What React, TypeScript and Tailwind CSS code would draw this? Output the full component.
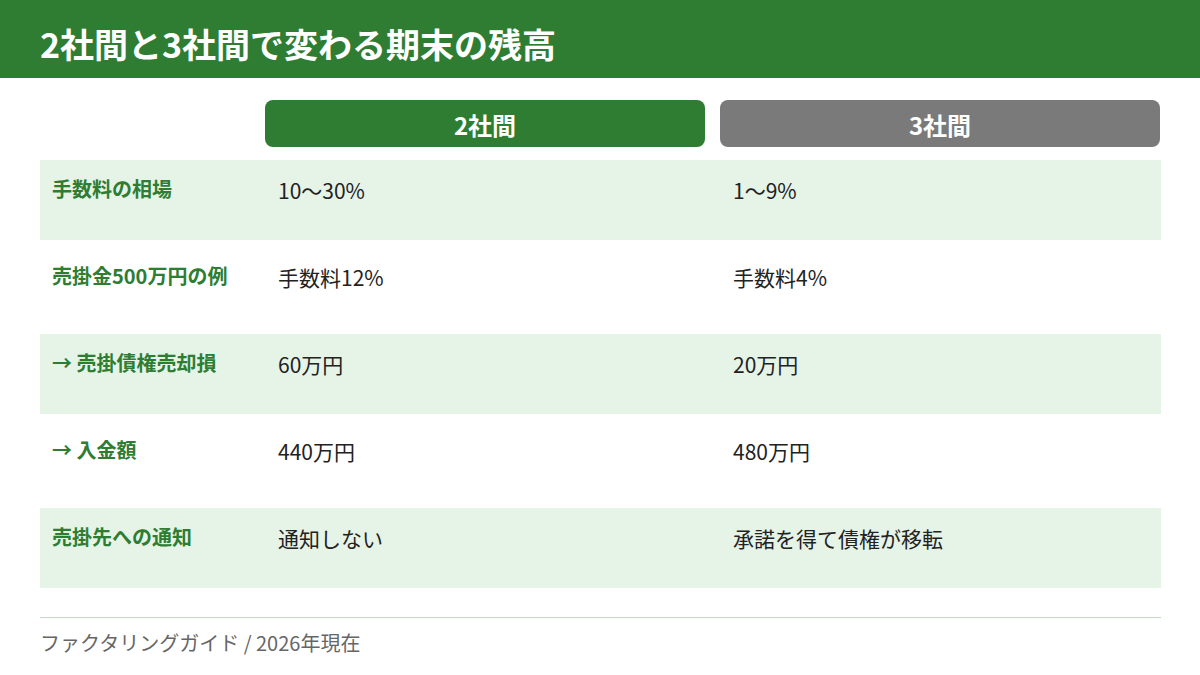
import React from "react";

const rows = [
  { label: "手数料の相場", two: "10～30%", three: "1～9%", shaded: true },
  { label: "売掛金500万円の例", two: "手数料12%", three: "手数料4%", shaded: false },
  { label: "→ 売掛債権売却損", two: "60万円", three: "20万円", shaded: true },
  { label: "→ 入金額", two: "440万円", three: "480万円", shaded: false },
  { label: "売掛先への通知", two: "通知しない", three: "承諾を得て債権が移転", shaded: true },
];

export default function App() {
  return (
    <div
      className="w-[1200px] h-[675px] bg-white overflow-hidden"
      style={{ fontFamily: '"Noto Sans CJK JP", "Noto Sans", sans-serif' }}
    >
      <header className="h-[78px] bg-[#2e7d32] flex items-center px-[40px] pt-[10px]">
        <h1 className="text-white text-[34px] font-bold leading-none">
          2社間と3社間で変わる期末の残高
        </h1>
      </header>

      <div className="px-[40px] pt-[22px]">
        <div className="flex">
          <div className="w-[226px]" />
          <div className="flex gap-[15px]">
            <div className="w-[440px] h-[47px] rounded-lg bg-[#2e7d32] text-white text-[24px] font-bold flex items-center justify-center pt-[3px]">
              2社間
            </div>
            <div className="w-[440px] h-[47px] rounded-lg bg-[#7a7a7a] text-white text-[24px] font-bold flex items-center justify-center pt-[3px]">
              3社間
            </div>
          </div>
        </div>

        <div className="mt-[13px] flex flex-col gap-[7px]">
          {rows.map((r) => (
            <div
              key={r.label}
              className={`flex h-[80px] w-[1121px] pt-[15px] ${r.shaded ? "bg-[#e6f4e8]" : "bg-white"}`}
            >
              <div className="w-[226px] px-[12px] text-[20px] font-bold text-[#2e7d32] leading-[28px]">
                {r.label}
              </div>
              <div className="flex gap-[15px]">
                <div className="w-[440px] px-[12px] text-[21px] text-[#222] leading-[30px]">
                  {r.two}
                </div>
                <div className="w-[440px] px-[12px] text-[21px] text-[#222] leading-[30px]">
                  {r.three}
                </div>
              </div>
            </div>
          ))}
        </div>

        <div className="mt-[29px] border-t border-[#c8d4c8] w-[1121px]" />
        <div className="pt-[12px] text-[20px] text-[#666] leading-[26px]">
          ファクタリングガイド / 2026年現在
        </div>
      </div>
    </div>
  );
}
